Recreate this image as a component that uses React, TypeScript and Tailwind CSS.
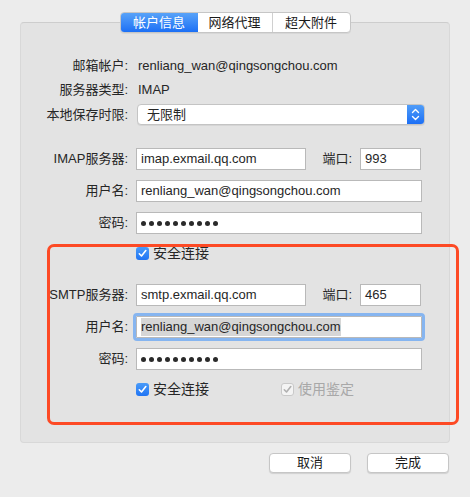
import React from 'react';

const labelCls = 'w-[107px] shrink-0 text-right whitespace-nowrap';

function Dots() {
  return (
    <div className="flex items-center gap-[3px]">
      {Array.from({ length: 10 }).map((_, i) => (
        <span key={i} className="w-[5px] h-[5px] rounded-full bg-[#2a2a2a]" />
      ))}
    </div>
  );
}

function Check({ disabled }: { disabled?: boolean }) {
  return (
    <span
      className={
        disabled
          ? 'w-[13px] h-[13px] rounded-[3px] border border-[#c9c9c9] bg-[#f4f4f4] flex items-center justify-center'
          : 'w-[13px] h-[13px] rounded-[3px] bg-gradient-to-b from-[#4a9bf8] to-[#1f74f4] flex items-center justify-center'
      }
    >
      <svg width="11" height="11" viewBox="0 0 11 11">
        <path
          d="M2.3 5.8 L4.5 8 L8.8 2.6"
          fill="none"
          stroke={disabled ? '#b0b0b0' : '#fff'}
          strokeWidth="1.6"
          strokeLinecap="round"
          strokeLinejoin="round"
        />
      </svg>
    </span>
  );
}

function Field({ children, w, focus }: { children: React.ReactNode; w: string; focus?: boolean }) {
  return (
    <div
      className={`${w} h-[22px] bg-white border border-[#b9b9b9] flex items-center pl-[4px] ${
        focus ? 'outline-[3px] outline-solid outline-[#86b5f0] rounded-[1px]' : ''
      }`}
    >
      {children}
    </div>
  );
}

export default function App() {
  return (
    <div className="w-[470px] h-[497px] bg-[#ececec] relative overflow-hidden font-['Liberation_Sans','Noto_Sans_CJK_SC',sans-serif] text-[13px] text-[#262626]">
      {/* tabs */}
      <div className="flex justify-center pt-[12px] relative z-10">
        <div className="flex h-[21px] rounded-[4px] border border-[#c6c6c6] bg-white overflow-hidden shadow-[0_1px_0_rgba(0,0,0,0.05)]">
          <div className="w-[77px] flex items-center justify-center text-white bg-gradient-to-b from-[#58a2f8] to-[#1b6ff5]">
            帐户信息
          </div>
          <div className="w-[75px] flex items-center justify-center border-r border-[#d0d0d0] text-[#1a1a1a]">
            网络代理
          </div>
          <div className="w-[77px] flex items-center justify-center text-[#1a1a1a]">超大附件</div>
        </div>
      </div>

      {/* panel */}
      <div className="mx-[20px] w-[430px] -mt-[11px] h-[421px] bg-[#e3e3e3] border border-[#d8d8d8] border-t-[#cdcdcd] rounded-[4px] pt-[33px]">
        <div className="flex items-center h-[20px] gap-[10px]">
          <span className={labelCls}>邮箱帐户:</span>
          <span>renliang_wan@qingsongchou.com</span>
        </div>
        <div className="flex items-center h-[20px] gap-[10px] mt-[4px]">
          <span className={labelCls}>服务器类型:</span>
          <span>IMAP</span>
        </div>
        <div className="flex items-center h-[21px] gap-[9px] mt-[4px]">
          <span className={labelCls}>本地保存时限:</span>
          <div className="w-[288px] h-[21px] flex rounded-[4px] border border-[#c4c4c4] bg-white overflow-hidden shadow-[0_1px_0_rgba(0,0,0,0.06)]">
            <span className="flex-1 flex items-center pl-[9px]">无限制</span>
            <span className="w-[17px] bg-gradient-to-b from-[#4f9cf8] to-[#1c6ff5] flex items-center justify-center">
              <svg width="9" height="15" viewBox="0 0 9 15">
                <path d="M1.5 5.5 L4.5 2.5 L7.5 5.5 M1.5 9.5 L4.5 12.5 L7.5 9.5" fill="none" stroke="#fff" strokeWidth="1.4" strokeLinecap="round" strokeLinejoin="round" />
              </svg>
            </span>
          </div>
        </div>

        {/* IMAP */}
        <div className="flex items-center h-[22px] gap-[8px] mt-[23px]">
          <span className={labelCls}>IMAP服务器:</span>
          <Field w="w-[170px]">imap.exmail.qq.com</Field>
          <span className="w-[46px] text-right -ml-[8px]">端口:</span>
          <Field w="w-[61px]">
            <span className="ml-0">993</span>
          </Field>
        </div>
        <div className="flex items-center h-[22px] gap-[8px] mt-[10px]">
          <span className={labelCls}>用户名:</span>
          <Field w="w-[286px]">renliang_wan@qingsongchou.com</Field>
        </div>
        <div className="flex items-center h-[22px] gap-[8px] mt-[10px]">
          <span className={labelCls}>密码:</span>
          <Field w="w-[286px]">
            <Dots />
          </Field>
        </div>
        <div className="flex items-center h-[18px] gap-[4px] mt-[10px] pl-[115px]">
          <Check />
          <span className="text-[14px]">安全连接</span>
        </div>

        {/* SMTP */}
        <div className="flex items-center h-[22px] gap-[8px] mt-[22px]">
          <span className={labelCls}>SMTP服务器:</span>
          <Field w="w-[170px]">smtp.exmail.qq.com</Field>
          <span className="w-[46px] text-right -ml-[8px]">端口:</span>
          <Field w="w-[61px]">465</Field>
        </div>
        <div className="flex items-center h-[22px] gap-[8px] mt-[10px]">
          <span className={labelCls}>用户名:</span>
          <Field w="w-[286px]" focus>
            <span className="bg-[#d6d6d6] leading-[18px]">renliang_wan@qingsongchou.com</span>
          </Field>
        </div>
        <div className="flex items-center h-[22px] gap-[8px] mt-[10px]">
          <span className={labelCls}>密码:</span>
          <Field w="w-[286px]">
            <Dots />
          </Field>
        </div>
        <div className="flex items-center h-[18px] mt-[10px] pl-[115px]">
          <div className="flex items-center gap-[4px] w-[145px]">
            <Check />
            <span className="text-[14px]">安全连接</span>
          </div>
          <div className="flex items-center gap-[4px]">
            <Check disabled />
            <span className="text-[14px] text-[#a8a8a8]">使用鉴定</span>
          </div>
        </div>
      </div>

      {/* buttons */}
      <div className="flex justify-end gap-[16px] pr-[21px] mt-[10px]">
        <button className="w-[82px] h-[20px] bg-white rounded-[4px] border border-[#c6c6c6] shadow-[0_1px_1px_rgba(0,0,0,0.12)] text-[13px] text-[#1a1a1a] flex items-center justify-center">
          取消
        </button>
        <button className="w-[82px] h-[20px] bg-white rounded-[4px] border border-[#c6c6c6] shadow-[0_1px_1px_rgba(0,0,0,0.12)] text-[13px] text-[#1a1a1a] flex items-center justify-center">
          完成
        </button>
      </div>

      {/* annotation */}
      <div className="absolute left-[47px] top-[244px] w-[412px] h-[181px] border-[3px] border-[#fd4a25] rounded-[7px] pointer-events-none" />
    </div>
  );
}
